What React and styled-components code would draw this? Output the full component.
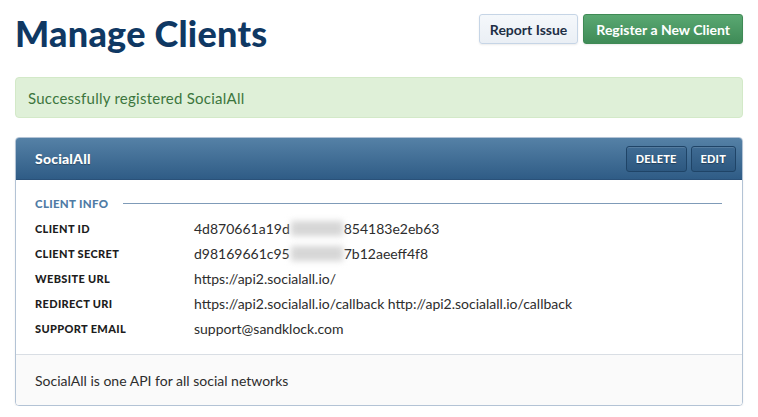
import React from 'react';
import styled, { createGlobalStyle } from 'styled-components';

const GlobalStyle = createGlobalStyle`
  body {
    margin: 0;
    background: #fff;
    font-family: Lato, "Liberation Sans", sans-serif;
    color: #333;
  }
`;

const Page = styled.div`
  padding: 0 15px;
  width: 728px;
`;

const Header = styled.div`
  display: flex;
  justify-content: space-between;
  align-items: flex-start;
  height: 77px;
`;

const Title = styled.h1`
  margin: 12px 0 0;
  font-size: 36px;
  font-weight: 900;
  color: #0f3863;
  letter-spacing: 0.25px;
  line-height: 42px;
`;

const Actions = styled.div`
  display: flex;
  gap: 5px;
  margin-top: 14px;
`;

const Button = styled.button`
  height: 30px;
  padding: 0 ${p => (p.$primary ? 12 : 10)}px;
  border-radius: 3px;
  font-family: Lato, "Liberation Sans", sans-serif;
  font-size: 14px;
  font-weight: 700;
  cursor: pointer;
  border: 1px solid ${p => (p.$primary ? '#3f8a55' : '#c6d5e6')};
  color: ${p => (p.$primary ? '#fff' : '#1e2f45')};
  background: ${p =>
    p.$primary
      ? 'linear-gradient(#5aa872, #3f8b57)'
      : 'linear-gradient(#f5f8fb, #eaeff5)'};
  box-shadow: 0 1px 2px rgba(0, 0, 0, 0.08);
`;

const Alert = styled.div`
  height: 41px;
  box-sizing: border-box;
  display: flex;
  align-items: center;
  padding: 0 12px;
  background: #dff0d8;
  border: 1px solid #d3e9c8;
  border-radius: 4px;
  color: #3c763d;
  font-size: 15px;
  letter-spacing: 0.25px;
  margin-bottom: 19px;
`;

const Panel = styled.div`
  border: 1px solid #b3c3d5;
  border-radius: 4px;
  overflow: hidden;
  box-shadow: 0 1px 2px rgba(0, 0, 0, 0.08);
`;

const PanelHead = styled.div`
  height: 42px;
  box-sizing: border-box;
  display: flex;
  align-items: center;
  justify-content: space-between;
  padding: 0 6px 0 19px;
  background: linear-gradient(#5581a6, #2f5c86);
  border-bottom: 1px solid #2a5179;
`;

const PanelTitle = styled.div`
  color: #fff;
  font-weight: 900;
  font-size: 14px;
  letter-spacing: 0.2px;
  text-shadow: 0 1px 1px rgba(0, 0, 0, 0.3);
`;

const HeadButtons = styled.div`
  display: flex;
  gap: 4px;
`;

const HeadButton = styled.button`
  height: 26px;
  padding: 0 9px;
  border: 1px solid #1f4467;
  border-radius: 3px;
  background: linear-gradient(#3f6b93, #2d5880);
  color: #fff;
  font-family: Lato, "Liberation Sans", sans-serif;
  font-weight: 900;
  font-size: 11px;
  letter-spacing: 0.2px;
  text-shadow: 0 1px 1px rgba(0, 0, 0, 0.35);
  box-shadow: inset 0 1px 0 rgba(255, 255, 255, 0.12);
`;

const PanelBody = styled.div`
  padding: 17px 20px 13px 19px;
  background: #fff;
  border-bottom: 1px solid #d9dee4;
`;

const Section = styled.div`
  display: flex;
  align-items: center;
  gap: 15px;
  margin-bottom: 6px;
`;

const SectionLabel = styled.div`
  color: #4f7ba5;
  font-size: 11.5px;
  font-weight: 900;
  text-transform: uppercase;
  letter-spacing: 0.3px;
`;

const Rule = styled.div`
  flex: 1;
  height: 1px;
  background: #7f9bb8;
`;

const InfoGrid = styled.dl`
  display: grid;
  grid-template-columns: 159px 1fr;
  grid-auto-rows: 25px;
  align-items: center;
  margin: 0;
`;

const Label = styled.dt`
  font-size: 11px;
  font-weight: 900;
  color: #1d1d1d;
  text-transform: uppercase;
  letter-spacing: 0.35px;
`;

const Value = styled.dd`
  margin: 0;
  font-size: 14px;
  color: #2d2d2d;
  display: flex;
  align-items: center;
`;

const Blur = styled.span`
  display: inline-block;
  width: ${p => p.$w}px;
  height: 15px;
  background: #d6d6d6;
  filter: blur(3px);
  margin: 0 1px;
`;

const PanelFoot = styled.div`
  height: 50px;
  display: flex;
  align-items: center;
  padding: 0 19px;
  background: #fafafa;
  font-size: 14px;
  color: #2d2d2d;
`;

const rows = [
  { label: 'Client ID', value: <>4d870661a19d<Blur $w={52} />854183e2eb63</> },
  { label: 'Client Secret', value: <>d98169661c95<Blur $w={52} />7b12aeeff4f8</> },
  { label: 'Website URL', value: 'https://api2.socialall.io/' },
  {
    label: 'Redirect URI',
    value: 'https://api2.socialall.io/callback http://api2.socialall.io/callback',
  },
  { label: 'Support Email', value: 'support@sandklock.com' },
];

export default function App() {
  return (
    <Page>
      <GlobalStyle />
      <Header>
        <Title>Manage Clients</Title>
        <Actions>
          <Button>Report Issue</Button>
          <Button $primary>Register a New Client</Button>
        </Actions>
      </Header>

      <Alert>Successfully registered SocialAll</Alert>

      <Panel>
        <PanelHead>
          <PanelTitle>SocialAll</PanelTitle>
          <HeadButtons>
            <HeadButton>DELETE</HeadButton>
            <HeadButton>EDIT</HeadButton>
          </HeadButtons>
        </PanelHead>
        <PanelBody>
          <Section>
            <SectionLabel>Client Info</SectionLabel>
            <Rule />
          </Section>
          <InfoGrid>
            {rows.map(r => (
              <React.Fragment key={r.label}>
                <Label>{r.label}</Label>
                <Value>{r.value}</Value>
              </React.Fragment>
            ))}
          </InfoGrid>
        </PanelBody>
        <PanelFoot>SocialAll is one API for all social networks</PanelFoot>
      </Panel>
    </Page>
  );
}
